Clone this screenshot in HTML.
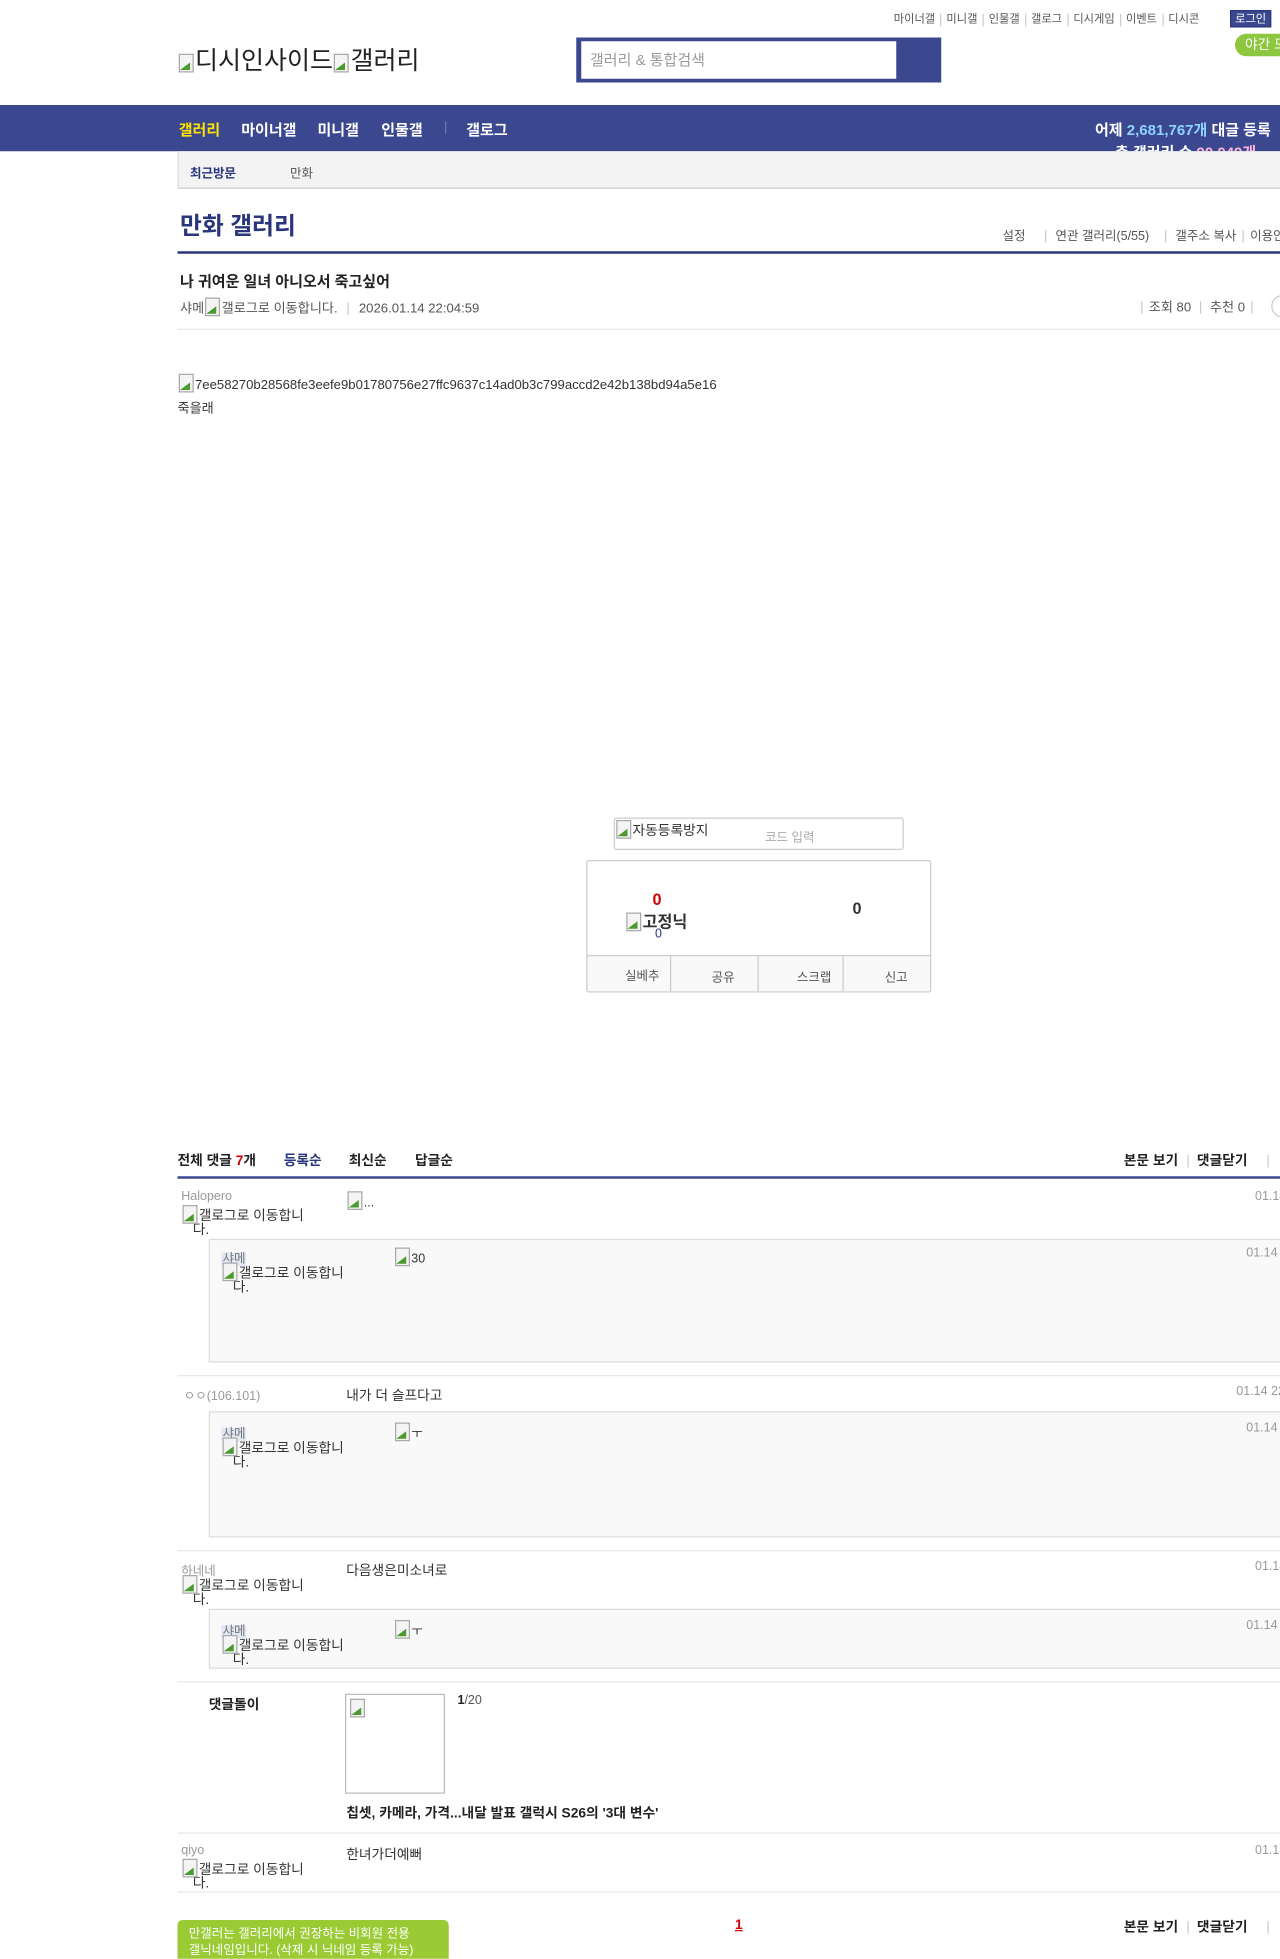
<!DOCTYPE html>
<html><head><meta charset="utf-8">
<style>
*{margin:0;padding:0;box-sizing:border-box}
html,body{width:1280px;height:1958px;overflow:hidden;background:#fff}
body{font-family:"Liberation Sans","Noto Sans CJK KR",sans-serif;color:#333}
#w{position:absolute;left:0;top:0;width:1024px;height:1567px;transform:scale(1.25);transform-origin:0 0;overflow:hidden}
.a{position:absolute;white-space:nowrap}
.s11{font-size:11px}.s12{font-size:12px}
.g{color:#999}
.b{font-weight:bold}
.sep{display:inline-block;width:1px;height:10px;background:#ccc;margin:0 5px;vertical-align:middle}
.bi{display:inline-block;width:14px;height:16px;vertical-align:-3px;position:relative}
.bi:before{content:"";position:absolute;left:1px;top:1px;width:10px;height:13px;border:1px solid #aaa;background:#f4f4f4}
.bi:after{content:"";position:absolute;left:2px;top:8px;width:0;height:0;border-left:8px solid transparent;border-bottom:6px solid #4a9a2e}
.hl{position:absolute;height:1px;background:#e8e8e8;left:142px;width:882px}
.rbox{position:absolute;left:167px;width:870px;background:#f9f9f9;border:1px solid #ddd}
.tag{background:#e2e7f5;color:#777;font-size:10px;padding:0 1px}
</style></head><body><div id="w">
<div class="a" style="left:715px;top:8px;color:#555;font-size:9px">마이너갤<span class="sep" style="margin:0 4px"></span>미니갤<span class="sep" style="margin:0 4px"></span>인물갤<span class="sep" style="margin:0 4px"></span>갤로그<span class="sep" style="margin:0 4px"></span>디시게임<span class="sep" style="margin:0 4px"></span>이벤트<span class="sep" style="margin:0 4px"></span>디시콘</div>
<div class="a" style="left:984px;top:8px;width:33px;height:14px;background:#3b4890;border:1px solid #29367c;color:#fff;font-size:9px;text-align:center;line-height:12px">로그인</div>
<div class="a" style="left:988px;top:27px;width:50px;height:18px;background:#8dc63f;border-radius:9px;color:#fff;font-size:11px;line-height:18px;padding-left:8px">야간 모드</div>
<div class="a" style="left:142px;top:32px;font-size:20px;color:#222"><span class="bi"></span>디시인사이드<span class="bi"></span>갤러리</div>
<div class="a" style="left:461px;top:30px;width:292px;height:36px;background:#3b4890"></div>
<div class="a" style="left:465px;top:33px;width:252px;height:30px;background:#fff;font-size:12px;color:#999;line-height:30px;padding-left:7px">갤러리 &amp; 통합검색</div>
<div class="a" style="left:0;top:84px;width:1024px;height:37px;background:#3b4890;overflow:hidden">
 <div class="a b s12" style="left:143px;top:11px;color:#ffe400">갤러리</div>
 <div class="a b s12" style="left:193px;top:11px;color:#fff">마이너갤</div>
 <div class="a b s12" style="left:254px;top:11px;color:#fff">미니갤</div>
 <div class="a b s12" style="left:305px;top:11px;color:#fff">인물갤</div>
 <div class="a" style="left:356px;top:13px;width:1px;height:10px;background:#6c77b0"></div>
 <div class="a b s12" style="left:373px;top:11px;color:#fff">갤로그</div>
 <div class="a b s12" style="left:876px;top:11px;color:#fff">어제 <span style="color:#8fd3ff">2,681,767개</span> 대글 등록</div>
 <div class="a b s12" style="left:892px;top:29px;color:#fff">총 갤러리 수 <span style="color:#ffb3d9">90,049개</span></div>
</div>
<div class="a" style="left:142px;top:121px;width:882px;height:30px;background:#f3f3f3;border-left:1px solid #ddd;border-bottom:1px solid #ccc"></div>
<div class="a b" style="left:152px;top:130px;font-size:10px;color:#29367c">최근방문</div>
<div class="a" style="left:232px;top:130px;font-size:10px;color:#555">만화</div>
<div class="a b" style="left:144px;top:166px;font-size:19px;color:#29367c">만화 갤러리</div>
<div class="a" style="left:802px;top:180px;font-size:10px;color:#555">설정<span class="sep" style="margin:0 7px 0 16px"></span>연관 갤러리(5/55)<span class="sep" style="margin:0 7px 0 13px"></span>갤주소 복사<span class="sep"></span>이용안내</div>
<div class="a" style="left:142px;top:201px;width:882px;height:2px;background:#29367c"></div>
<div class="a b s12" style="left:144px;top:216px;color:#222">나 귀여운 일녀 아니오서 죽고싶어</div>
<div class="a" style="left:144px;top:237px;color:#555;font-size:10.5px">샤메<span class="bi"></span>갤로그로 이동합니다.<span class="sep" style="margin:0 8px"></span>2026.01.14 22:04:59</div>
<div class="a" style="left:908px;top:238px;color:#555;font-size:10.5px"><span class="sep"></span>조회 80<span class="sep" style="margin:0 7px"></span>추천 0<span class="sep"></span></div>
<div class="a" style="left:1017px;top:236px;width:18px;height:18px;border:1px solid #ccc;border-radius:50%"></div>
<div class="hl" style="top:263px"></div>
<div class="a" style="left:142px;top:298px;color:#333;font-size:10.5px"><span class="bi"></span>7ee58270b28568fe3eefe9b01780756e27ffc9637c14ad0b3c799accd2e42b138bd94a5e16</div>
<div class="a" style="left:142px;top:319px;font-size:10.5px">죽을래</div>
<div class="a" style="left:491px;top:654px;width:232px;height:26px;border:1px solid #ccc;border-radius:2px"></div>
<div class="a s11" style="left:492px;top:655px;color:#333"><span class="bi"></span>자동등록방지</div>
<div class="a" style="left:612px;top:661px;font-size:10px;color:#aaa">코드 입력</div>
<div class="a" style="left:469px;top:688px;width:276px;height:106px;border:1px solid #ccc;border-radius:2px;overflow:hidden">
 <div style="position:absolute;left:0;top:75px;width:274px;height:30px;border-top:1px solid #ccc;background:#f9f9f9;display:flex">
 <div style="flex:1;border-right:1px solid #ccc;font-size:10px;color:#555;padding:7px 0 0 30px">실베추</div>
 <div style="flex:1;border-right:1px solid #ccc;font-size:10px;color:#555;padding:8px 0 0 32px">공유</div>
 <div style="flex:1;border-right:1px solid #ccc;font-size:10px;color:#555;padding:8px 0 0 31px">스크랩</div>
 <div style="flex:1;font-size:10px;color:#555;padding:8px 0 0 33px">신고</div>
 </div>
</div>
<div class="a b" style="left:522px;top:712px;font-size:13px;color:#c00">0</div>
<div class="a b" style="left:500px;top:727px;font-size:13px;color:#333"><span class="bi"></span>고정닉</div>
<div class="a" style="left:524px;top:742px;font-size:10px;color:#29367c">0</div>
<div class="a b" style="left:682px;top:719px;font-size:13px;color:#333">0</div>
<div class="a b s11" style="left:142px;top:920px;color:#222">전체 댓글 <span style="color:#c00">7</span>개</div>
<div class="a b s11" style="left:227px;top:920px;color:#29367c">등록순</div>
<div class="a b s11" style="left:279px;top:920px;color:#222">최신순</div>
<div class="a b s11" style="left:332px;top:920px;color:#222">답글순</div>
<div class="a b s11" style="left:899px;top:920px;color:#222">본문 보기<span class="sep" style="margin:0 7px"></span>댓글닫기<span class="sep" style="margin:0 0 0 16px"></span></div>
<div class="a" style="left:142px;top:941px;width:882px;height:2px;background:#3b4890"></div>
<div class="a g" style="left:145px;top:952px;font-size:10px">Halopero</div>
<div class="a s11" style="left:145px;top:963px;line-height:11px"><span class="bi"></span>갤로그로 이동합니<br>&nbsp;&nbsp;&nbsp;다.</div>
<div class="a" style="left:277px;top:952px;font-size:10px"><span class="bi"></span>...</div>
<div class="a g" style="left:1004px;top:952px;font-size:10px">01.14</div>
<div class="rbox" style="top:991px;height:99px"></div>
<div class="a" style="left:177px;top:997px"><span class="tag">샤메</span></div>
<div class="a s11" style="left:177px;top:1009px;line-height:11px"><span class="bi"></span>갤로그로 이동합니<br>&nbsp;&nbsp;&nbsp;다.</div>
<div class="a" style="left:315px;top:997px;font-size:10px"><span class="bi"></span>30</div>
<div class="a g" style="left:997px;top:997px;font-size:10px">01.14 22</div>
<div class="hl" style="top:1100px"></div>
<div class="a g" style="left:147px;top:1108px;font-size:10px">ㅇㅇ(106.101)</div>
<div class="a s11" style="left:277px;top:1108px">내가 더 슬프다고</div>
<div class="a g" style="left:989px;top:1108px;font-size:10px">01.14 22</div>
<div class="rbox" style="top:1129px;height:101px"></div>
<div class="a" style="left:177px;top:1137px"><span class="tag">샤메</span></div>
<div class="a s11" style="left:177px;top:1149px;line-height:11px"><span class="bi"></span>갤로그로 이동합니<br>&nbsp;&nbsp;&nbsp;다.</div>
<div class="a" style="left:315px;top:1137px;font-size:10px"><span class="bi"></span>ㅜ</div>
<div class="a g" style="left:997px;top:1137px;font-size:10px">01.14 22</div>
<div class="hl" style="top:1240px"></div>
<div class="a g" style="left:145px;top:1248px;font-size:10px">하네네</div>
<div class="a s11" style="left:145px;top:1259px;line-height:11px"><span class="bi"></span>갤로그로 이동합니<br>&nbsp;&nbsp;&nbsp;다.</div>
<div class="a s11" style="left:277px;top:1248px">다음생은미소녀로</div>
<div class="a g" style="left:1004px;top:1248px;font-size:10px">01.14</div>
<div class="rbox" style="top:1287px;height:48px"></div>
<div class="a" style="left:177px;top:1295px"><span class="tag">샤메</span></div>
<div class="a s11" style="left:177px;top:1307px;line-height:11px"><span class="bi"></span>갤로그로 이동합니<br>&nbsp;&nbsp;&nbsp;다.</div>
<div class="a" style="left:315px;top:1295px;font-size:10px"><span class="bi"></span>ㅜ</div>
<div class="a g" style="left:997px;top:1295px;font-size:10px">01.14 22</div>
<div class="hl" style="top:1345px"></div>
<div class="a b s11" style="left:167px;top:1355px;color:#222">댓글돌이</div>
<div class="a" style="left:276px;top:1355px;width:80px;height:80px;border:1px solid #bbb"><span class="bi" style="margin:2px"></span></div>
<div class="a" style="left:366px;top:1355px;font-size:10px;color:#555"><b style="color:#222">1</b>/20</div>
<div class="a b s11" style="left:277px;top:1442px;color:#222">칩셋, 카메라, 가격...내달 발표 갤럭시 S26의 '3대 변수'</div>
<div class="hl" style="top:1466px"></div>
<div class="a g" style="left:145px;top:1475px;font-size:10px">qiyo</div>
<div class="a s11" style="left:145px;top:1486px;line-height:11px"><span class="bi"></span>갤로그로 이동합니<br>&nbsp;&nbsp;&nbsp;다.</div>
<div class="a s11" style="left:277px;top:1475px">한녀가더예뻐</div>
<div class="a g" style="left:1004px;top:1475px;font-size:10px">01.14</div>
<div class="hl" style="top:1513px"></div>
<div class="a" style="left:142px;top:1536px;width:217px;height:40px;background:#9acb34;border-radius:4px 4px 0 0;color:#fff;font-size:10px;line-height:13px;padding:5px 0 0 9px;white-space:normal">만갤러는 갤러리에서 권장하는 비회원 전용<br>갤닉네임입니다. (삭제 시 닉네임 등록 가능)</div>
<div class="a b s11" style="left:588px;top:1534px;color:#c00;text-decoration:underline">1</div>
<div class="a b s11" style="left:899px;top:1533px;color:#222">본문 보기<span class="sep" style="margin:0 7px"></span>댓글닫기<span class="sep" style="margin:0 0 0 16px"></span></div>
</div></body></html>
